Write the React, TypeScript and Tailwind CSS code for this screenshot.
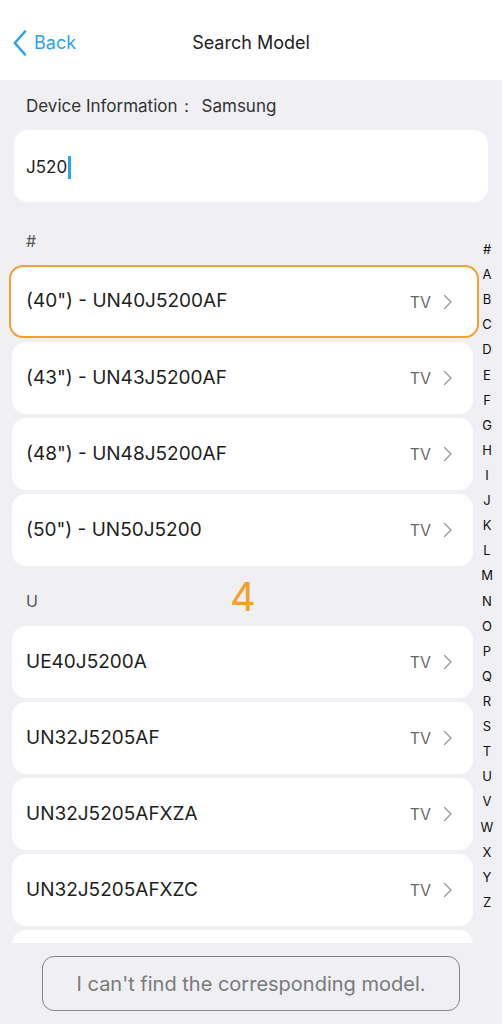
import { Fragment } from 'react'

const letters = ['#', 'A', 'B', 'C', 'D', 'E', 'F', 'G', 'H', 'I', 'J', 'K', 'L', 'M', 'N', 'O', 'P', 'Q', 'R', 'S', 'T', 'U', 'V', 'W', 'X', 'Y', 'Z']

const groups = [
  { title: '#', items: ['(40") - UN40J5200AF', '(43") - UN43J5200AF', '(48") - UN48J5200AF', '(50") - UN50J5200'] },
  { title: 'U', items: ['UE40J5200A', 'UN32J5205AF', 'UN32J5205AFXZA', 'UN32J5205AFXZC', ''] },
]

function Chevron() {
  return (
    <svg width="9" height="16" viewBox="0 0 9 16" fill="none">
      <path d="M1.5 1.5 L8 8 L1.5 14.5" stroke="#9a9a9a" strokeWidth="1.4" strokeLinecap="round" strokeLinejoin="round" />
    </svg>
  )
}

function Row({ name, active }: { name: string; active?: boolean }) {
  return (
    <div
      className={
        active
          ? 'h-[73px] -ml-[3px] -mt-[1px] mb-[4px] w-[470px] rounded-[14px] border-2 border-[#f5a02a] bg-white flex items-center pl-[15px] pr-[25px] shrink-0'
          : 'h-[72px] w-[461px] rounded-[14px] bg-white flex items-center pl-[14px] pr-[21px] shrink-0 mb-[4px]'
      }
    >
      <span className="flex-1 text-[19px] text-[#1e1e1e]">{name}</span>
      {name && (
        <Fragment>
          <span className="text-[16px] text-[#6b6b6b] mr-[12px]">TV</span>
          <Chevron />
        </Fragment>
      )}
    </div>
  )
}

export default function App() {
  return (
    <div
      className="relative w-[502px] h-[1024px] bg-[#efeff4] flex flex-col overflow-hidden"
      style={{ fontFamily: 'Inter, "Noto Sans", sans-serif' }}
    >
      <div className="h-[80px] bg-white relative flex items-center pt-[5px] shrink-0">
        <div className="flex items-center pl-[13px] gap-[7px] text-[#2ba4e5] text-[18px]">
          <svg width="14" height="26" viewBox="0 0 14 26" fill="none">
            <path d="M12 1.5 L1.8 13 L12 24.5" stroke="#2ba4e5" strokeWidth="2.6" strokeLinecap="round" strokeLinejoin="round" />
          </svg>
          <span>Back</span>
        </div>
        <div className="absolute inset-x-0 text-center text-[18px] text-[#222] pointer-events-none">Search Model</div>
      </div>

      <div className="h-[50px] flex items-center pt-[4px] pl-[26px] text-[17px] text-[#333] shrink-0">
        Device Information：<span className="ml-[7px]">Samsung</span>
      </div>

      <div className="mx-[14px] h-[72px] rounded-[14px] bg-white flex items-center pt-[3px] pl-[12px] text-[17px] text-[#222] shrink-0">
        J520
        <span className="inline-block w-[3px] h-[23px] bg-[#2ba4e5] ml-[1px]" />
      </div>

      <div className="h-[943px] overflow-hidden shrink-0 pl-[12px] -mb-[300px]">
        {groups.map((g, gi) => (
          <div key={g.title}>
            <div className={gi === 0 ? 'h-[64px] pt-[28px] pl-[14px] text-[16px] text-[#555] leading-[22px]' : 'h-[56px] pt-[20px] pl-[14px] text-[16px] text-[#555] leading-[22px]'}>
              {g.title}
            </div>
            {g.items.map((it, i) => (
              <Row key={i} name={it} active={gi === 0 && i === 0} />
            ))}
          </div>
        ))}
      </div>

      <div className="absolute top-[943px] left-0 w-[502px] h-[81px] bg-[#efeff4] flex justify-center pt-[13px]">
        <div className="w-[418px] h-[55px] rounded-[12px] border border-[#858585] flex items-center justify-center text-[20px] text-[#7a7a7a]">
          I can't find the corresponding model.
        </div>
      </div>

      <div className="absolute top-[237px] right-[2px] w-[26px] flex flex-col items-center">
        {letters.map((l) => (
          <div key={l} className="h-[25.12px] leading-[25px] text-[13px] text-[#111]">{l}</div>
        ))}
      </div>

      <div className="absolute top-[575px] left-[230px] text-[40px] leading-[44px] text-[#f5a02a]">4</div>
    </div>
  )
}
